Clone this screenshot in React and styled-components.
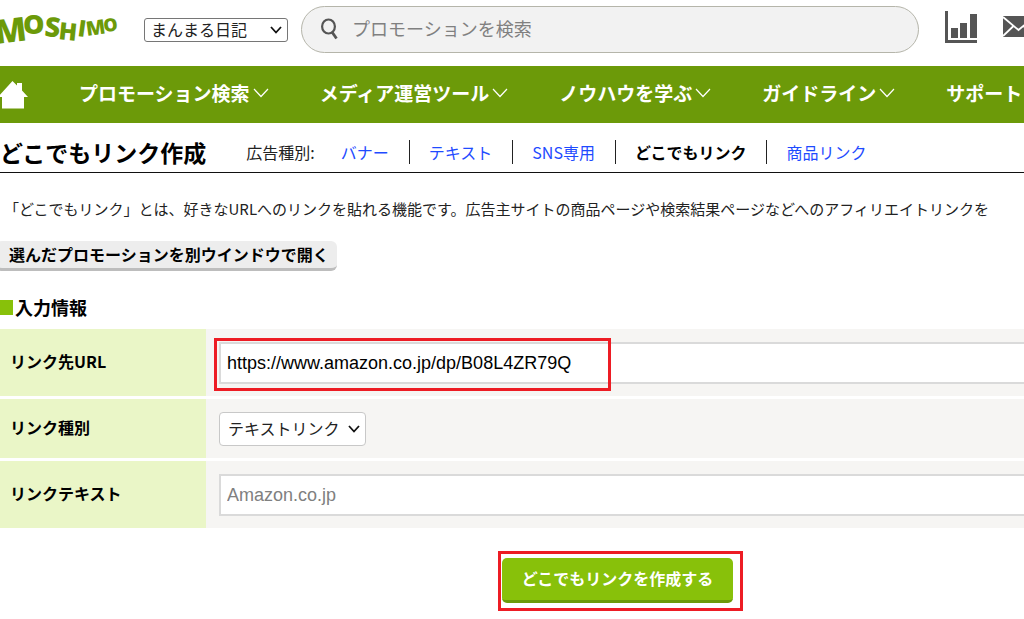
import React, { useState } from 'react';
import styled, { createGlobalStyle } from 'styled-components';

const GREEN = '#6c9a09';
const LIGHT_GREEN = '#88c10a';
const RED = '#ed1c24';

const GlobalStyle = createGlobalStyle`
    * {
        box-sizing: border-box;
    }
    body {
        margin: 0;
        overflow-x: hidden;
        background: #fff;
        color: #000;
        font-family: "Noto Sans CJK JP", sans-serif;
        font-size: 16px;
        line-height: 24px;
    }
    button, select, input {
        font-family: inherit;
        font-size: inherit;
    }
`

const Page = styled.div`
    overflow: hidden;
    padding-bottom: 24px;
`

const Header = styled.header`
    display: flex;
    align-items: center;
    height: 66px;
    padding: 6px 0 13px;
`

const LogoLink = styled.a`
    flex: none;
    width: 118px;
    margin-right: 26px;
    svg {
        display: block;
        overflow: visible;
    }
`

const SelectBox = styled.div`
    display: grid;
    flex: none;
    align-items: center;
    width: ${props => props.$width};
    select, svg {
        grid-area: 1 / 1;
    }
    svg {
        justify-self: end;
        margin-right: 5px;
        pointer-events: none;
    }
`

const SiteSelect = styled.select`
    appearance: none;
    width: 100%;
    height: 24px;
    padding: 0 24px 3px 6px;
    border: 1px solid #767676;
    border-radius: 3px;
    background: #fff;
    color: #222;
    line-height: 20px;
`

const SearchForm = styled.form`
    display: flex;
    flex: 1;
    align-items: center;
    height: 47px;
    margin-left: 13px;
    padding: 0 24px 2px 18px;
    border: 1px solid #b5b5aa;
    border-radius: 24px;
    background: #f2f2f2;
    svg {
        flex: none;
    }
`

const SearchInput = styled.input`
    flex: 1;
    min-width: 0;
    height: 32px;
    margin-left: 12px;
    padding: 0 0 2px;
    border: 0;
    outline: 0;
    background: none;
    font-size: 18px;
    &::placeholder {
        color: #808080;
        opacity: 1;
    }
`

const HeaderIcons = styled.div`
    display: flex;
    flex: none;
    align-items: center;
    gap: 26px;
    margin: 0 -10px 0 26px;
    padding-bottom: 6px;
    svg {
        display: block;
    }
`

const Nav = styled.nav`
    display: flex;
    align-items: center;
    gap: 51px;
    height: 57px;
    background: ${GREEN};
    white-space: nowrap;
`

const HomeLink = styled.a`
    flex: none;
    width: 28px;
    svg {
        display: block;
    }
`

const NavLink = styled.a`
    display: flex;
    flex: none;
    align-items: center;
    gap: 3px;
    padding-bottom: 4px;
    color: #fff;
    font-size: 19px;
    font-weight: 700;
    text-decoration: none;
`

const TitleBar = styled.div`
    display: flex;
    align-items: center;
    height: 50px;
    padding-top: 13px;
    padding-bottom: 5px;
    border-bottom: 1px solid #111;
    white-space: nowrap;
`

const Title = styled.h1`
    margin: 0;
    font-size: 23px;
    line-height: 32px;
`

const TypeLabel = styled.span`
    margin-left: 40px;
    color: #222;
`

const TypeList = styled.ul`
    display: flex;
    margin: 0 0 0 7px;
    padding: 0;
    list-style: none;
`

const TypeItem = styled.li`
    padding: 0 20px 0 19px;
    & + & {
        border-left: 1px solid #222;
    }
`

const TypeLink = styled.a`
    color: ${props => props.$current ? '#000' : '#1f4bff'};
    font-weight: ${props => props.$current ? 700 : 400};
    text-decoration: none;
`

const Description = styled.p`
    margin: 24px 0 20px;
    padding-left: 4px;
    color: #222;
    font-size: 15px;
    white-space: nowrap;
`

const WindowButton = styled.button`
    display: block;
    height: 30px;
    margin-left: -4px;
    padding: 0 8px 0 13px;
    border: 0;
    border-bottom: 3px solid #bdbdbd;
    border-radius: 6px;
    background: #ededed;
    color: #000;
    font-weight: 700;
    line-height: 23px;
`

const SectionTitle = styled.h2`
    display: flex;
    align-items: center;
    gap: 2px;
    margin: 24px 0 10px;
    font-size: 18px;
    line-height: 24px;
    &::before {
        content: "";
        width: 13px;
        height: 15px;
        background: ${LIGHT_GREEN};
    }
`

const Rows = styled.div`
    display: grid;
    gap: 3px;
`

const Row = styled.div`
    display: grid;
    grid-template-columns: 206px 1fr;
`

const RowLabel = styled.label`
    display: flex;
    align-items: center;
    padding: 0 0 4px 10px;
    background: #eaf6c7;
    font-weight: 700;
`

const Cell = styled.div`
    position: relative;
    padding: 13px 0 12px 13px;
    background: #f6f5f3;
`

const TextInput = styled.input`
    display: block;
    width: calc(100% + 12px);
    height: 42px;
    padding: 0 6px;
    border: 2px solid #dadada;
    border-radius: 0;
    outline: 0;
    background: #fff;
    color: #000;
    font-family: "Liberation Sans", Arial, sans-serif;
    font-size: 18px;
    &::placeholder {
        color: #808080;
        opacity: 1;
    }
`

const TypeSelect = styled.select`
    appearance: none;
    width: 100%;
    height: 34px;
    padding: 0 24px 2px 8px;
    border: 1px solid #c8c8c8;
    border-radius: 4px;
    background: #fff;
    color: #222;
`

const UrlMark = styled.div`
    position: absolute;
    top: 9px;
    left: 8px;
    width: 397px;
    height: 53px;
    border: 3px solid ${RED};
    pointer-events: none;
`

const SubmitArea = styled.div`
    display: flex;
    margin: 30px 0 0 49%;
`

const SubmitWrap = styled.div`
    position: relative;
`

const SubmitButton = styled.button`
    display: block;
    height: 45px;
    padding: 0 20px 2px;
    border: 0;
    border-bottom: 3px solid ${GREEN};
    border-radius: 5px;
    background: ${LIGHT_GREEN};
    color: #fff;
    font-weight: 700;
`

const SubmitMark = styled.div`
    position: absolute;
    inset: -7px -10px -8px -4px;
    border: 3px solid ${RED};
    pointer-events: none;
`

// x, baseline, size, rotation
const LOGO_LETTERS = [
    ['M', -4, 44, 33, -7],
    ['O', 23, 34, 27, 0],
    ['S', 44, 36, 27, 5],
    ['H', 58, 39, 24, 6],
    ['I', 77, 36, 23, 8],
    ['M', 87, 36, 20, -8],
    ['O', 104, 32, 18, -6],
]

const Logo = () => (
    <svg width="118" height="47" viewBox="0 6 118 47" fill={GREEN} role="img" aria-label="MOSHIMO">
        {LOGO_LETTERS.map(([letter, x, y, size, angle], i) =>
            <text
                key={i}
                fontFamily="'Open Sans', sans-serif"
                fontWeight="800"
                fontSize={size}
                transform={`translate(${x} ${y}) rotate(${angle})`}
            >
                {letter}
            </text>
        )}
    </svg>
)

const SelectArrow = () => (
    <svg width="14" height="10" viewBox="0 0 14 10" fill="none" stroke="#111" strokeWidth="1.8">
        <path d="M2 2l5 5.5L12 2" />
    </svg>
)

const SearchIcon = () => (
    <svg width="20" height="22" viewBox="0 0 20 22" fill="none" stroke="#555">
        <ellipse cx="8.5" cy="8.5" rx="6.4" ry="7" strokeWidth="2.2" />
        <path d="M12 14l4.5 6.5" strokeWidth="2.8" />
    </svg>
)

const ChartIcon = () => (
    <svg width="32" height="32" viewBox="0 0 32 32" fill="#555">
        <path d="M0 0h3v29h29v3H0z" />
        <path d="M6 17h7v10H6zM15 12h7v15h-7zM25 3h7v24h-7z" />
    </svg>
)

const MailIcon = () => (
    <svg width="31" height="21" viewBox="0 0 31 21">
        <path fill="#555" d="M0 0h31v21H0z" />
        <path fill="none" stroke="#fff" strokeWidth="1.8" d="M0 1l15.500 13L31 1M0 20l10.500-10M31 20l-10.500-10" />
    </svg>
)

const HomeIcon = () => (
    <svg width="28" height="28" viewBox="0 0 28 28" fill="#fff">
        <path d="M12.500 0L17 4.500V2h5v7.500l6 6.500h-4v11.500H2V16h-4z" />
    </svg>
)

const Chevron = () => (
    <svg width="16" height="10" viewBox="0 0 16 10" fill="none" stroke="#fff" strokeWidth="1.2">
        <path d="M1 1l7 7.500L15 1" />
    </svg>
)

const NAV_ITEMS = ['プロモーション検索', 'メディア運営ツール', 'ノウハウを学ぶ', 'ガイドライン', 'サポート']
const AD_TYPES = ['バナー', 'テキスト', 'SNS専用', 'どこでもリンク', '商品リンク']
const CURRENT_TYPE = 'どこでもリンク'

const App = () => {
    const [url, setUrl] = useState('https://www.amazon.co.jp/dp/B08L4ZR79Q');

    return (
        <Page>
            <GlobalStyle />
            <Header>
                <LogoLink href="#"><Logo /></LogoLink>
                <SelectBox $width="144px">
                    <SiteSelect aria-label="サイト">
                        <option>まんまる日記</option>
                    </SiteSelect>
                    <SelectArrow />
                </SelectBox>
                <SearchForm onSubmit={e => e.preventDefault()}>
                    <SearchIcon />
                    <SearchInput type="text" placeholder="プロモーションを検索" aria-label="プロモーションを検索" />
                </SearchForm>
                <HeaderIcons>
                    <a href="#" aria-label="レポート"><ChartIcon /></a>
                    <a href="#" aria-label="メール"><MailIcon /></a>
                </HeaderIcons>
            </Header>

            <Nav>
                <HomeLink href="#" aria-label="ホーム"><HomeIcon /></HomeLink>
                {NAV_ITEMS.map(item =>
                    <NavLink href="#" key={item}>
                        {item}
                        <Chevron />
                    </NavLink>
                )}
            </Nav>

            <main>
                <TitleBar>
                    <Title>どこでもリンク作成</Title>
                    <TypeLabel>広告種別:</TypeLabel>
                    <TypeList>
                        {AD_TYPES.map(type =>
                            <TypeItem key={type}>
                                <TypeLink href="#" $current={type === CURRENT_TYPE}>{type}</TypeLink>
                            </TypeItem>
                        )}
                    </TypeList>
                </TitleBar>

                <Description>
                    「どこでもリンク」とは、好きなURLへのリンクを貼れる機能です。広告主サイトの商品ページや検索結果ページなどへのアフィリエイトリンクを
                </Description>
                <WindowButton type="button">選んだプロモーションを別ウインドウで開く</WindowButton>

                <SectionTitle>入力情報</SectionTitle>
                <form onSubmit={e => e.preventDefault()}>
                    <Rows>
                        <Row>
                            <RowLabel htmlFor="link-url">リンク先URL</RowLabel>
                            <Cell>
                                <TextInput id="link-url" type="text" value={url} onChange={e => setUrl(e.target.value)} />
                                <UrlMark />
                            </Cell>
                        </Row>
                        <Row>
                            <RowLabel htmlFor="link-type">リンク種別</RowLabel>
                            <Cell>
                                <SelectBox $width="147px">
                                    <TypeSelect id="link-type">
                                        <option>テキストリンク</option>
                                    </TypeSelect>
                                    <SelectArrow />
                                </SelectBox>
                            </Cell>
                        </Row>
                        <Row>
                            <RowLabel htmlFor="link-text">リンクテキスト</RowLabel>
                            <Cell>
                                <TextInput id="link-text" type="text" placeholder="Amazon.co.jp" />
                            </Cell>
                        </Row>
                    </Rows>
                    <SubmitArea>
                        <SubmitWrap>
                            <SubmitButton type="submit">どこでもリンクを作成する</SubmitButton>
                            <SubmitMark />
                        </SubmitWrap>
                    </SubmitArea>
                </form>
            </main>
        </Page>
    );
}

export default App;
